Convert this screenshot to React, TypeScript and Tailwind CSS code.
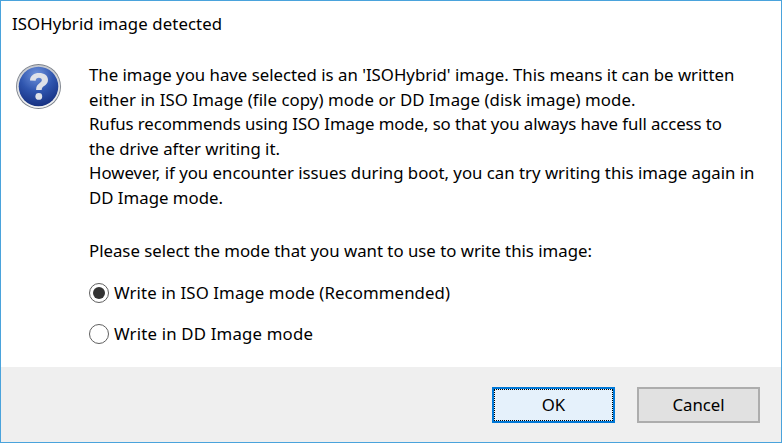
const font = { fontFamily: "'Noto Sans', 'Open Sans', sans-serif" }

function QuestionIcon() {
    return (
        <svg width="48" height="48" viewBox="0 0 48 48">
            <defs>
                <radialGradient id="ball" cx="0.45" cy="0.2" r="0.85">
                    <stop offset="0" stopColor="#6f93dc" />
                    <stop offset="0.5" stopColor="#2f55ae" />
                    <stop offset="1" stopColor="#132c7c" />
                </radialGradient>
                <linearGradient id="ring" x1="0" y1="0" x2="0" y2="1">
                    <stop offset="0" stopColor="#c4c7cd" />
                    <stop offset="1" stopColor="#f4f5f6" />
                </linearGradient>
            </defs>
            <circle cx="23.5" cy="23.5" r="22.5" fill="#7d838c" />
            <circle cx="23.5" cy="23.5" r="21.6" fill="url(#ring)" />
            <circle cx="23.5" cy="23.5" r="19.8" fill="url(#ball)" />
            <path d="M15 17.5c0-5 4.2-7.5 9-7.5 5.2 0 9 2.7 9 6.9 0 3-1.8 4.6-3.9 6.1-1.7 1.2-2.4 2-2.4 4h-5.6c0-3.4 1-5 3.1-6.5 1.7-1.3 2.6-2 2.6-3.4 0-1.4-1.1-2.3-2.9-2.3-2 0-3.1 1.2-3.3 3z" fill="#dfe2e8" />
            <circle cx="23.8" cy="33.4" r="3.4" fill="#dfe2e8" />
        </svg>
    )
}

function Radio({ checked, label, className }: { checked?: boolean; label: string; className: string }) {
    return (
        <div className="flex items-center h-[24px]">
            <span className="w-[20px] h-[20px] rounded-full border border-[#5f5f5f] bg-white flex items-center justify-center shrink-0">
                {checked && <span className="w-[12px] h-[12px] rounded-full bg-[#333333]" />}
            </span>
            <span className={`ml-[5px] ${className}`}>{label}</span>
        </div>
    )
}

export default function App() {
    return (
        <div className="w-[782px] h-[443px] bg-white border border-[#4aa3dc] flex flex-col text-[16.8px] text-black overflow-hidden" style={font}>
            <div className="pl-[11px] pt-[12px] h-[46px] leading-[22px] tracking-[0.09px]">ISOHybrid image detected</div>
            <div className="flex-1 flex pl-[14px]">
                <div className="pt-[16px] w-[74px] shrink-0">
                    <QuestionIcon />
                </div>
                <div className="pt-[16px] leading-[24.6px]">
                    <p className="whitespace-nowrap">The image you have selected is an 'ISOHybrid' image. This means it can be written</p>
                    <p className="whitespace-nowrap tracking-[0.07px]">either in ISO Image (file copy) mode or DD Image (disk image) mode.</p>
                    <p className="whitespace-nowrap tracking-[-0.09px]">Rufus recommends using ISO Image mode, so that you always have full access to</p>
                    <p className="whitespace-nowrap">the drive after writing it.</p>
                    <p className="whitespace-nowrap">However, if you encounter issues during boot, you can try writing this image again in</p>
                    <p className="whitespace-nowrap">DD Image mode.</p>
                    <p className="mt-[28px]">Please select the mode that you want to use to write this image:</p>
                    <div className="mt-[18px] flex flex-col gap-[17px]">
                        <Radio checked label="Write in ISO Image mode (Recommended)" className="tracking-[0.1px]" />
                        <Radio label="Write in DD Image mode" className="tracking-[0.18px]" />
                    </div>
                </div>
            </div>
            <div className="h-[75px] bg-[#efefef] flex items-start justify-end gap-[22px] pt-[20px] pr-[21px] shrink-0">
                <button className="w-[123px] h-[36px] border-2 border-[#0078d7] bg-[#e5f1fb] flex items-center justify-center p-0">
                    <span className="w-full h-full border border-dotted border-black flex items-center justify-center">OK</span>
                </button>
                <button className="w-[123px] h-[36px] border-2 border-[#adadad] bg-[#e1e1e1] flex items-center justify-center">Cancel</button>
            </div>
        </div>
    )
}
